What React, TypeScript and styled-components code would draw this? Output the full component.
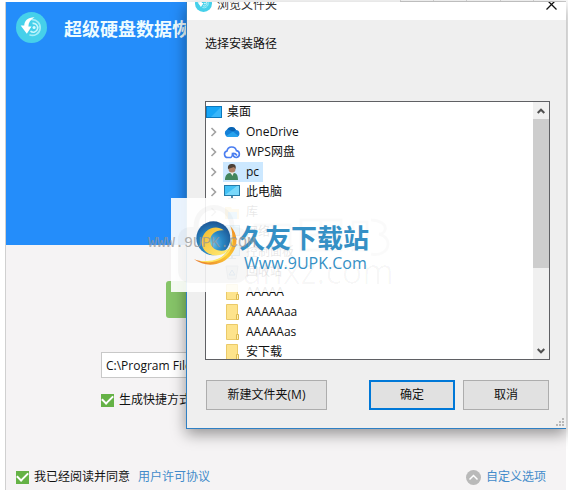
import React from "react";
import styled, { createGlobalStyle, css } from "styled-components";

const ui = '"Open Sans", "Noto Sans CJK SC", sans-serif';

const GlobalStyle = createGlobalStyle`
  * { box-sizing: border-box; }
  body { margin: 0; background: #fff; font: 12px/20px ${ui}; color: #111; overflow: hidden; }
  button, input { font: inherit; color: inherit; }
`;

const Stage = styled.div`
  position: relative;
  display: flex;
  flex-direction: column;
  min-height: 100vh;
  padding: 2px 2px 1px 5px;
  overflow: hidden;
`;

const Installer = styled.main`
  flex: 1;
  display: flex;
  flex-direction: column;
  background: #f5f3f4;
  border-left: 1px solid #d0d0d0;
`;

const Banner = styled.header`
  display: flex;
  align-items: flex-start;
  gap: 17px;
  height: 243px;
  padding: 10px;
  background: #248dfa;
`;

const Title = styled.h1`
  margin: 0;
  font-size: 18px;
  line-height: 34px;
  font-weight: 700;
  color: #eefcff;
  white-space: nowrap;
`;

const InstallForm = styled.form`
  flex: 1;
  display: flex;
  flex-direction: column;
  padding: 36px 96px 0 95px;
`;

const InstallButton = styled.button`
  align-self: center;
  width: 240px;
  height: 37px;
  margin-bottom: 34px;
  border: 0;
  border-radius: 3px;
  background: #86c468;
  color: #fff;
`;

const PathInput = styled.input`
  height: 26px;
  margin-bottom: 12px;
  padding: 0 4px;
  border: 1px solid #c8c8c8;
  background: #fff;
`;

const CheckLabel = styled.label`
  display: flex;
  align-items: center;
  gap: 5px;
  white-space: nowrap;
`;

const CheckBox = styled.input.attrs({ type: "checkbox" })`
  appearance: none;
  width: 13px;
  height: 13px;
  margin: 0;
  background: #65b246;
  display: grid;
  place-items: center;
  &:checked::after {
    content: "";
    width: 9px;
    height: 5px;
    margin-bottom: 3px;
    border: solid #fff;
    border-width: 0 0 2px 2px;
    transform: rotate(-45deg);
  }
`;

const Footer = styled.footer`
  display: flex;
  align-items: center;
  gap: 8px;
  padding: 0 20px 3px 10px;
`;

const Link = styled.a`
  color: #428bca;
  text-decoration: none;
`;

const OptionsButton = styled.button`
  display: flex;
  align-items: center;
  gap: 5px;
  margin-left: auto;
  padding: 0;
  border: 0;
  background: none;
  color: #428bca;
`;

const Dialog = styled.section`
  position: absolute;
  top: 2px;
  left: 186px;
  right: 2px;
  display: flex;
  flex-direction: column;
  background: #efefef;
  border: solid #2f80c4;
  border-width: 0 0 1px 1px;
  box-shadow: 0 5px 14px rgba(0, 0, 0, 0.4);
`;

const DialogBar = styled.header`
  display: flex;
  align-items: flex-start;
  gap: 5px;
  height: 18px;
  padding: 0 9px 0 8px;
  background: #fff;
  overflow: hidden;
`;

const BarIcon = styled.span`
  display: flex;
  margin-top: -7px;
`;

const BarTitle = styled.h2`
  flex: 1;
  margin: -7px 0 0;
  font-size: 12px;
  line-height: 20px;
  font-weight: 400;
  color: #333;
`;

const CloseButton = styled.button`
  display: flex;
  margin: -3px 0 0;
  padding: 0;
  border: 0;
  background: none;
`;

const TabEdge = styled.div`
  position: absolute;
  top: 0;
  right: 2px;
  display: grid;
  grid-template-columns: repeat(5, 1fr);
  width: 166px;
  height: 2px;
  border-bottom: 1px solid #d0d0d0;
`;

const TabCell = styled.span`
  border-left: 1px solid #dcdcdc;
`;

const DialogBody = styled.div`
  display: flex;
  flex-direction: column;
  padding: 14px 16px 18px 18px;
`;

const Prompt = styled.p`
  margin: 0 0 47px;
`;

const TreeFrame = styled.div`
  display: flex;
  height: 259px;
  border: 1px solid #5f6064;
  background: #fff;
`;

const Tree = styled.ul`
  flex: 1;
  margin: 0;
  padding: 0;
  list-style: none;
  overflow: hidden;
`;

const TreeRow = styled.li<{ $root?: boolean }>`
  display: flex;
  align-items: center;
  height: 20px;
  padding-left: ${(p) => (p.$root ? 0 : 4)}px;
`;

const Expander = styled.span`
  display: flex;
  width: 13px;
`;

const RowLabel = styled.span<{ $selected?: boolean }>`
  display: flex;
  align-items: center;
  gap: 5px;
  height: 20px;
  padding-right: 4px;
  white-space: nowrap;
  ${(p) => p.$selected && css`background: #cce8ff;`}
`;

const ScrollTrack = styled.div`
  display: flex;
  flex-direction: column;
  align-items: center;
  width: 16px;
  background: #f0f0f0;
`;

const ScrollArrow = styled.button`
  display: grid;
  place-items: center;
  width: 16px;
  height: 17px;
  padding: 0;
  border: 0;
  background: none;
`;

const ScrollThumb = styled.div`
  width: 16px;
  height: 149px;
  margin-bottom: auto;
  background: #cdcdcd;
`;

const Actions = styled.div`
  display: flex;
  gap: 8px;
  padding: 20px 1px 0;
`;

const DialogButton = styled.button<{ $primary?: boolean; $wide?: boolean }>`
  width: ${(p) => (p.$wide ? 121 : 86)}px;
  height: 30px;
  margin-right: ${(p) => (p.$wide ? "auto" : 0)};
  padding: 0;
  border: ${(p) => (p.$primary ? "2px solid #0078d7" : "1px solid #adadad")};
  background: #e1e1e1;
`;

const Grip = styled.svg`
  position: absolute;
  right: 2px;
  bottom: 2px;
`;

const Watermark = styled.div`
  position: absolute;
  top: 198px;
  left: 171px;
  width: 220px;
  height: 94px;
  background: rgba(255, 255, 255, 0.9);
  pointer-events: none;
`;

const FaintName = styled.span`
  position: absolute;
  top: 57px;
  left: 72px;
  font-size: 34px;
  line-height: 32px;
  color: rgba(0, 0, 0, 0.03);
`;

const FaintArt = styled.svg`
  position: absolute;
  top: 0;
  left: 0;
`;

const SiteBrand = styled.div`
  position: absolute;
  top: 22px;
  left: 22px;
  display: flex;
`;

const BrandText = styled.div`
  display: flex;
  flex-direction: column;
  color: #3590c5;
  white-space: nowrap;
`;

const BrandName = styled.strong`
  font: 700 26px/34px "Noto Sans CJK SC", sans-serif;
`;

const BrandUrl = styled.span`
  padding-left: 5px;
  font: 16px/18px "Open Sans", sans-serif;
`;

const SiteStamp = styled.span`
  position: absolute;
  top: 235px;
  left: 148px;
  font: 15px/18px "Liberation Mono", monospace;
  color: rgba(150, 150, 150, 0.75);
  pointer-events: none;
`;

function AppIcon({ size }: { size: number }) {
  return (
    <svg width={size} height={size} viewBox="0 0 30 30" aria-hidden="true">
      <circle cx="15" cy="15" r="15" fill="#46d0ea" />
      <path d="M15 7.500a7.600 7.600 0 1 1-2 14.600" fill="none" stroke="#a5eef8" strokeWidth="1.600" />
      <path d="M16 11a4.300 4.300 0 1 1-2 7.600" fill="none" stroke="#c9f6fc" strokeWidth="1.600" />
      <circle cx="17.500" cy="15" r="1.500" fill="#d9f9fd" />
      <path d="M18 5C11 5 8 9 8 13H4.500L10.500 21 15 14h-3c0-4 2-6.500 6-9z" fill="#fff" />
    </svg>
  );
}

type IconKind = "desktop" | "cloud" | "wps" | "user" | "pc" | "folder" | "library" | "bin";

function ItemIcon({ kind }: { kind: IconKind }) {
  const box = { width: 18, height: 18, viewBox: "0 0 18 18", "aria-hidden": true } as const;
  switch (kind) {
    case "desktop":
      return (
        <svg width="16" height="18" viewBox="0 0 16 18" aria-hidden="true">
          <path d="M0 3h16v12H0z" fill="#0b78bd" />
          <path d="M1 4h14v10H1z" fill="#16a5f6" />
          <path d="M5 14L15 4v10z" fill="#38b6fa" />
        </svg>
      );
    case "cloud":
      return (
        <svg {...box}>
          <path d="M5 14a4 4 0 0 1-1-7.500A5 5 0 0 1 13 7a3.600 3.600 0 0 1 1 7z" fill="#1480d8" />
          <path d="M4 6.500A5 5 0 0 1 13 7l-3 1.500-5-2z" fill="#0962b1" />
          <path d="M3 13l7-4.500L15.500 13 14 14H5z" fill="#27a2ed" />
        </svg>
      );
    case "wps":
      return (
        <svg {...box} fill="none" stroke="#4a7df0" strokeWidth="1.600">
          <path d="M8 14.500H4.700A3.300 3.300 0 0 1 4 8a4.800 4.800 0 0 1 9.400-.4 3.500 3.500 0 0 1 .1 6.900c-2.500 0-3.500-1.500-4-4 2.500-.5 3.500.5 4.500 2M8 14.500c1.500-1 1.500-2.500 1.500-4" />
        </svg>
      );
    case "user":
      return (
        <svg {...box}>
          <path d="M2 17c0-4 2-7 5-7l2 1 2-1c3 0 4 3 4 7z" fill="#43865d" />
          <path d="M7 9h4l-1.500 4z" fill="#f1eee4" />
          <circle cx="9" cy="6" r="3.500" fill="#b08066" />
          <path d="M5 6c-.5-4 1.500-5 4-5s4.500 1 3.500 5L11 4z" fill="#4c4139" />
        </svg>
      );
    case "pc":
      return (
        <svg {...box}>
          <path d="M1 2h16v11H1z" fill="#257ba9" />
          <path d="M2 3h14v9H2z" fill="#43c1f5" />
          <path d="M2 12L14 3h2v9z" fill="#79d8fb" />
          <path d="M8 13h2v2h3v1H5v-1h3z" fill="#5388a7" />
        </svg>
      );
    case "library":
      return (
        <svg {...box}>
          <path d="M2 4h6l1 2h7v10H2z" fill="#f5cd5e" />
          <path d="M5 9h9v7H5z" fill="#61b8e8" />
        </svg>
      );
    case "bin":
      return (
        <svg {...box}>
          <path d="M3 3h12l-2 13H5z" fill="#d5dde2" stroke="#9daab3" />
          <path d="M6 12l3-5 3 5z" fill="none" stroke="#3779b9" />
        </svg>
      );
    default:
      return (
        <svg {...box}>
          <path d="M3.500 1.500h11v15h-11z" fill="#fde38c" stroke="#ebca69" />
          <path d="M13.500 11.500h2v5h-2z" fill="#fff0b4" stroke="#dcb94f" />
        </svg>
      );
  }
}

interface Item {
  label: string;
  kind: IconKind;
  expandable?: boolean;
  selected?: boolean;
}

const items: Item[] = [
  { label: "OneDrive", kind: "cloud", expandable: true },
  { label: "WPS网盘", kind: "wps", expandable: true },
  { label: "pc", kind: "user", expandable: true, selected: true },
  { label: "此电脑", kind: "pc", expandable: true },
  { label: "库", kind: "library", expandable: true },
  { label: "网络", kind: "pc", expandable: true },
  { label: "控制面板", kind: "pc", expandable: true },
  { label: "回收站", kind: "bin" },
  { label: "AAAAA", kind: "folder" },
  { label: "AAAAAaa", kind: "folder" },
  { label: "AAAAAas", kind: "folder" },
  { label: "安下载", kind: "folder" },
];

function Globe() {
  return (
    <svg width="46" height="46" viewBox="39 33 138 138" aria-hidden="true">
      <defs>
        <radialGradient id="globe" cx="0.45" cy="0.65" r="0.65">
          <stop offset="0" stopColor="#6cc8ee" />
          <stop offset="0.5" stopColor="#2a87c4" />
          <stop offset="1" stopColor="#1c5492" />
        </radialGradient>
        <linearGradient id="ring" x1="1" y1="0" x2="0" y2="1">
          <stop offset="0" stopColor="#f08a22" />
          <stop offset="0.5" stopColor="#fbc935" />
          <stop offset="1" stopColor="#e8742a" />
        </linearGradient>
        <linearGradient id="crescent" x1="0" y1="0" x2="1" y2="1">
          <stop offset="0" stopColor="#f6b92c" />
          <stop offset="1" stopColor="#fff07c" />
        </linearGradient>
      </defs>
      <circle cx="100" cy="88" r="51" fill="url(#globe)" />
      <path d="M131 64C106 43 64 63 65 101c2 38 55 55 87 16-23 14-53 9-60-12-7-23 11-43 39-41z" fill="url(#crescent)" />
      <path d="M151 51c20 20 25 52 8 78-23 40-79 50-117 22 37 14 73 8 94-17 22-24 26-55 15-83z" fill="url(#ring)" />
      <path d="M156 78c4 35-18 66-51 74-17 5-34 5-48 3 27 11 62 4 82-16 18-17 23-39 17-61z" fill="#ffe45c" />
    </svg>
  );
}

export default function App() {
  return (
    <>
      <GlobalStyle />
      <Stage>
        <Installer>
          <Banner>
            <AppIcon size={31} />
            <Title>超级硬盘数据恢复软件</Title>
          </Banner>
          <InstallForm onSubmit={(e) => e.preventDefault()}>
            <InstallButton type="submit">立即安装</InstallButton>
            <PathInput aria-label="安装路径" defaultValue="C:\Program Files" />
            <CheckLabel>
              <CheckBox defaultChecked />
              生成快捷方式
            </CheckLabel>
          </InstallForm>
          <Footer>
            <CheckLabel>
              <CheckBox defaultChecked />
              我已经阅读并同意
            </CheckLabel>
            <Link href="#license">用户许可协议</Link>
            <OptionsButton type="button">
              <svg width="15" height="15" viewBox="0 0 15 15" aria-hidden="true">
                <circle cx="7.500" cy="7.500" r="7.500" fill="#b9b9b9" />
                <path d="M3.500 9.500l4-4 4 4" fill="none" stroke="#fff" strokeWidth="1.500" />
              </svg>
              自定义选项
            </OptionsButton>
          </Footer>
        </Installer>

        <TabEdge>
          <TabCell />
          <TabCell />
          <TabCell />
          <TabCell />
          <TabCell />
        </TabEdge>

        <Dialog role="dialog" aria-labelledby="dialog-title">
          <DialogBar>
            <BarIcon>
              <AppIcon size={17} />
            </BarIcon>
            <BarTitle id="dialog-title">浏览文件夹</BarTitle>
            <CloseButton type="button" aria-label="关闭">
              <svg width="11" height="11" viewBox="0 0 11 11" aria-hidden="true">
                <path d="M.5.5l10 10M10.500.5l-10 10" stroke="#111" strokeWidth="1.300" />
              </svg>
            </CloseButton>
          </DialogBar>
          <DialogBody>
            <Prompt>选择安装路径</Prompt>
            <TreeFrame>
              <Tree>
                <TreeRow $root>
                  <RowLabel>
                    <ItemIcon kind="desktop" />
                    桌面
                  </RowLabel>
                </TreeRow>
                {items.map((item) => (
                  <TreeRow key={item.label}>
                    <Expander>
                      {item.expandable && (
                        <svg width="7" height="10" viewBox="0 0 7 10" aria-hidden="true">
                          <path d="M1.500 1l4 4-4 4" fill="none" stroke="#a2a2a2" strokeWidth="1.600" />
                        </svg>
                      )}
                    </Expander>
                    <RowLabel $selected={item.selected}>
                      <ItemIcon kind={item.kind} />
                      {item.label}
                    </RowLabel>
                  </TreeRow>
                ))}
              </Tree>
              <ScrollTrack>
                <ScrollArrow type="button" aria-label="向上滚动">
                  <svg width="8" height="6" viewBox="0 0 8 6" aria-hidden="true">
                    <path d="M.7 5L4 1.700 7.300 5" fill="none" stroke="#505050" strokeWidth="2" />
                  </svg>
                </ScrollArrow>
                <ScrollThumb />
                <ScrollArrow type="button" aria-label="向下滚动">
                  <svg width="8" height="6" viewBox="0 0 8 6" aria-hidden="true">
                    <path d="M.7 1L4 4.300 7.300 1" fill="none" stroke="#505050" strokeWidth="2" />
                  </svg>
                </ScrollArrow>
              </ScrollTrack>
            </TreeFrame>
            <Actions>
              <DialogButton type="button" $wide>新建文件夹(M)</DialogButton>
              <DialogButton type="button" $primary>确定</DialogButton>
              <DialogButton type="button">取消</DialogButton>
            </Actions>
          </DialogBody>
          <Grip width="8" height="8" viewBox="0 0 8 8" aria-hidden="true">
            <path d="M6 0h2v2H6zM3 3h2v2H3zM6 3h2v2H6zM0 6h2v2H0zM3 6h2v2H3zM6 6h2v2H6z" fill="#b8b8b8" />
          </Grip>
        </Dialog>

        <Watermark>
          <FaintArt width="220" height="94" viewBox="0 0 220 94" aria-hidden="true">
            <rect x="7" y="29" width="70" height="56" rx="12" fill="rgba(0,0,0,0.03)" />
            <path d="M25 29c0-26 36-26 36 0" fill="none" stroke="rgba(0,0,0,0.03)" strokeWidth="5" />
            <path
              d="M84 27h35v24H84zM130 22h40v30h-40zM130 37h40M150 22v30M182 24h14v28h-14zM200 22c8 0 16 4 14 10-1 4-6 4-6 4s9 2 9 10-9 12-17 10"
              fill="none"
              stroke="rgba(0,0,0,0.02)"
              strokeWidth="3"
            />
          </FaintArt>
          <FaintName>anxz.com</FaintName>
          <SiteBrand>
            <Globe />
            <BrandText>
              <BrandName>久友下载站</BrandName>
              <BrandUrl>Www.9UPK.Com</BrandUrl>
            </BrandText>
          </SiteBrand>
        </Watermark>
        <SiteStamp>WWW.9UPK.COM</SiteStamp>
      </Stage>
    </>
  );
}
